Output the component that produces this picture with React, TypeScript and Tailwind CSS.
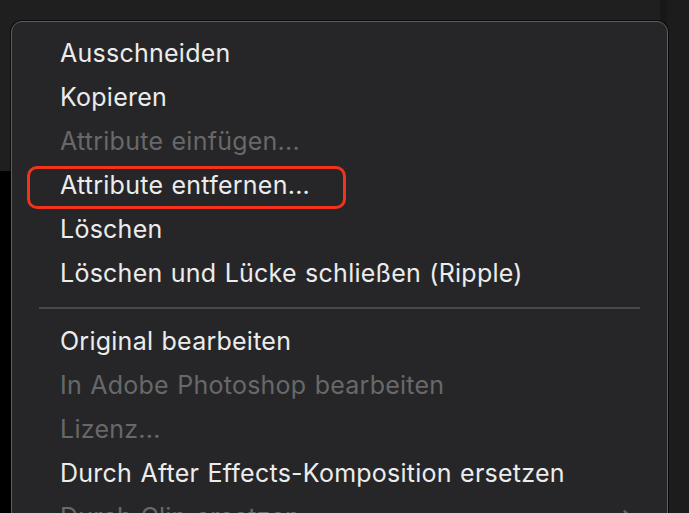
import { ChevronRight } from 'lucide-react'

type Item = { label: string; disabled?: boolean; highlight?: boolean; submenu?: boolean } | 'sep'

const items: Item[] = [
  { label: 'Ausschneiden' },
  { label: 'Kopieren' },
  { label: 'Attribute einfügen...', disabled: true },
  { label: 'Attribute entfernen...', highlight: true },
  { label: 'Löschen' },
  { label: 'Löschen und Lücke schließen (Ripple)' },
  'sep',
  { label: 'Original bearbeiten' },
  { label: 'In Adobe Photoshop bearbeiten', disabled: true },
  { label: 'Lizenz...', disabled: true },
  { label: 'Durch After Effects-Komposition ersetzen' },
  { label: 'Durch Clip ersetzen', disabled: true, submenu: true },
]

export default function App() {
  return (
    <div className="relative w-[689px] h-[513px] overflow-hidden bg-[#1f1f1f] flex font-['Inter','Noto_Sans',sans-serif]">
      {/* ── background window behind the menu ── */}
      <div className="w-[11px] flex flex-col">
        <div className="h-[171px] bg-[#1f1f1f]" />
        <div className="flex-1 bg-black" />
      </div>
      <div className="flex-1 bg-[#1f1f1f]" />
      <div className="w-[7px] bg-[#181818]" />
      <div className="w-[22px] bg-[#1c1c1c]" />

      {/* ── context menu ── */}
      <div className="absolute left-[11px] top-[21px] w-[657px] h-[540px] rounded-[11px] border border-[#5e5e60] bg-[#262628] pt-[10px] shadow-[0_0_0_1px_rgba(0,0,0,0.6)]">
        {items.map((item, i) => {
          if (item === 'sep') {
            return (
              <div key={i} className="h-[24px] flex items-center px-[27px]">
                <div className="h-[2px] w-full bg-[#48484a]" />
              </div>
            )
          }
          return (
            <div
              key={i}
              className={`relative h-[44px] flex items-center pl-[48px] pr-[30px] text-[25px] tracking-[0.25px] [word-spacing:1px] ${
                item.disabled ? 'text-[#68686a]' : 'text-[#ececec]'
              }`}
            >
              <span>{item.label}</span>
              {item.highlight && (
                <div className="absolute left-[15px] top-[2px] w-[319px] h-[43px] rounded-[10px] border-[3px] border-[#f2331c]" />
              )}
              {item.submenu && <ChevronRight size={26} strokeWidth={2.5} className="ml-auto -mr-[4px] text-[#5f5f61]" />}
            </div>
          )
        })}
      </div>
    </div>
  )
}
